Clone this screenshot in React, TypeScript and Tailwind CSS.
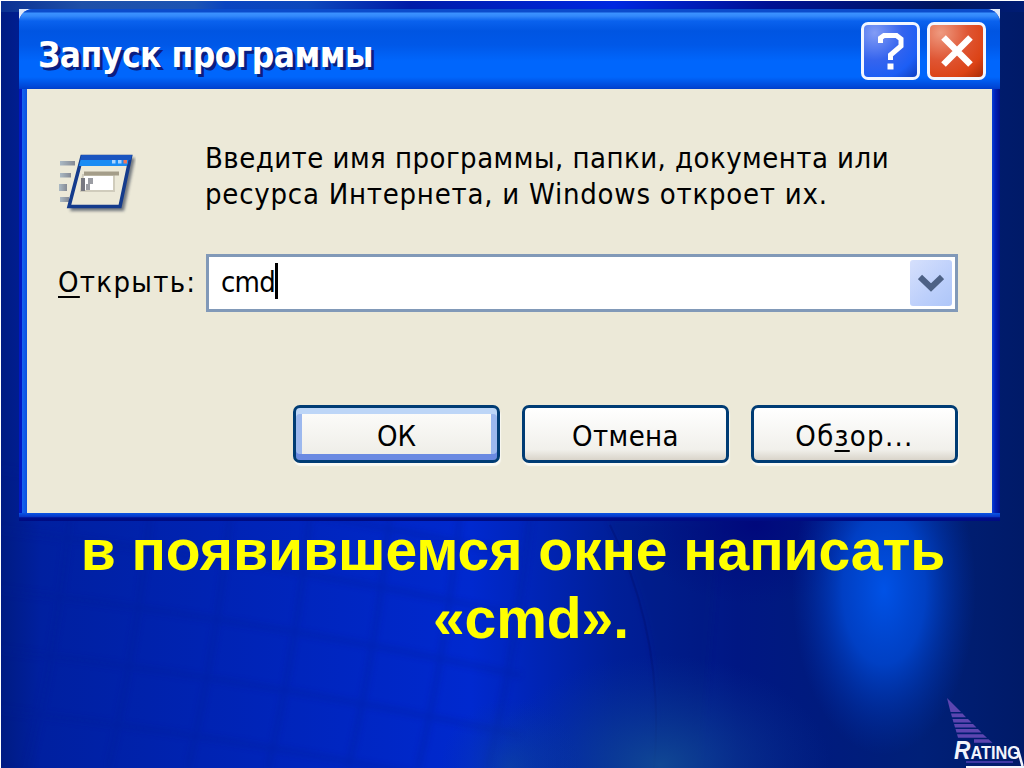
import React from "react";

const UI_FONT = "font-['DejaVu_Sans_Condensed','DejaVu_Sans',sans-serif] [font-stretch:condensed]";

const GRID_ROWS = [470, 530, 590, 650, 710, 770]
const GRID_COLS = [70, 150, 230, 310, 390, 460, 530]

const STRIPES = [
    "947,698 961,712 950.500,712",
    "951,713.500 962.500,713.500 966,717.300 952,717.300",
    "952.500,719 968,719 971.500,722.500 953.500,722.500",
    "954,724 973,724 976.500,727.500 955,727.500",
    "955.500,729 978,729 981.500,732.500 956.500,732.500",
    "957,734.200 983,734.200 987,737.800 958,737.800",
    "974,739.200 988.500,739.200 992.500,742.800 974,742.800",
]

const Backdrop = () => (
    <svg className="absolute inset-0 -z-10" width="1024" height="768" viewBox="0 0 1024 768" aria-hidden="true">
        <defs>
            <linearGradient id="base" x1="0" x2="1">
                <stop offset="0" stopColor="#001b82" />
                <stop offset="0.04" stopColor="#0020a0" />
                <stop offset="0.25" stopColor="#0024b8" />
                <stop offset="0.46" stopColor="#0029cf" />
                <stop offset="0.6" stopColor="#001f98" />
                <stop offset="0.72" stopColor="#001783" />
                <stop offset="0.9" stopColor="#002078" />
                <stop offset="1" stopColor="#001a68" />
            </linearGradient>
            <linearGradient id="topStrip" x1="0" x2="1">
                <stop offset="0" stopColor="#0a3092" />
                <stop offset="0.08" stopColor="#1e50a8" />
                <stop offset="0.19" stopColor="#1c54b4" />
                <stop offset="0.22" stopColor="#0a44c0" />
                <stop offset="0.3" stopColor="#0c48bc" />
                <stop offset="0.4" stopColor="#001ca8" />
                <stop offset="0.6" stopColor="#0028e0" />
                <stop offset="0.75" stopColor="#001294" />
                <stop offset="0.92" stopColor="#001660" />
                <stop offset="1" stopColor="#001c74" />
            </linearGradient>
            <radialGradient id="glow">
                <stop offset="0" stopColor="#0052e6" />
                <stop offset="0.45" stopColor="#004bdc" stopOpacity="0.75" />
                <stop offset="1" stopColor="#0034b0" stopOpacity="0" />
            </radialGradient>
            <radialGradient id="teal">
                <stop offset="0" stopColor="#134f96" stopOpacity="0.85" />
                <stop offset="1" stopColor="#0a3a98" stopOpacity="0" />
            </radialGradient>
            <radialGradient id="dark">
                <stop offset="0" stopColor="#00087c" />
                <stop offset="1" stopColor="#000e80" stopOpacity="0" />
            </radialGradient>
            <filter id="soft"><feGaussianBlur stdDeviation="3" /></filter>
        </defs>
        <rect width="1024" height="768" fill="url(#base)" />
        <rect width="1024" height="12" fill="url(#topStrip)" />
        <g stroke="#001a92" strokeWidth="5" fill="none" opacity="0.28" filter="url(#soft)">
            {GRID_ROWS.map((y) => (
                <path key={y} d={`M0 ${y} Q260 ${y + 30} 520 ${y + 85}`} />
            ))}
            {GRID_COLS.map((x) => (
                <path key={x} d={`M${x} 515 Q${x - 14} 650 ${x - 42} 768`} />
            ))}
        </g>
        <path d="M608 520 Q670 640 654 768 L700 768 L720 520 Z" fill="#001a7c" opacity="0.3" filter="url(#soft)" />
        <path d="M610 525 Q666 640 654 768" stroke="#001070" strokeWidth="2" fill="none" opacity="0.4" />
        <ellipse cx="755" cy="525" rx="120" ry="80" fill="url(#dark)" />
        <ellipse cx="660" cy="765" rx="170" ry="110" fill="url(#teal)" />
        <ellipse cx="510" cy="768" rx="70" ry="70" fill="url(#teal)" opacity="0.6" />
        <ellipse cx="884" cy="590" rx="92" ry="165" fill="url(#glow)" />
        <path d="M0 0.5H1024M0.5 0V768" stroke="#fff" />
    </svg>
)

const RatingLogo = () => (
    <svg className="absolute right-0 bottom-0" width="84" height="78" viewBox="940 690 84 78" aria-hidden="true">
        {STRIPES.map((points) => (
            <polygon key={points} points={points} fill="#5c45b0" />
        ))}
        <path d="M966 762H1013" stroke="#3d38a5" strokeWidth="2.2" />
        <path d="M966 767H1024" stroke="#f2f4fc" strokeWidth="2" />
        <text x="954" y="759" fill="#f2f4fc" fontFamily="Liberation Sans, sans-serif" fontWeight="bold" fontSize="25" textLength="66" lengthAdjust="spacingAndGlyphs">
            <tspan fontStyle="italic">R</tspan><tspan fontSize="18">ATING</tspan>
        </text>
        <path d="M1017.500 748L1022.500 766" stroke="#f2f4fc" strokeWidth="2.5" />
    </svg>
)

const RunIcon = () => (
    <svg width="80" height="64" viewBox="56 150 80 64" aria-hidden="true">
        <defs>
            <filter id="drop"><feGaussianBlur stdDeviation="1.6" /></filter>
            <linearGradient id="dash">
                <stop offset="0" stopColor="#aab9c4" />
                <stop offset="1" stopColor="#858a94" />
            </linearGradient>
        </defs>
        <path d="M85 158H135L124 211H70Z" fill="#4c5260" opacity="0.75" filter="url(#drop)" />
        <g fill="url(#dash)">
            <rect x="60" y="161" width="15" height="4.5" />
            <rect x="60" y="173" width="11" height="4.5" />
            <rect x="59" y="184" width="8" height="7" />
            <rect x="60" y="197" width="9" height="5" />
        </g>
        <path d="M82 156.500H130.500L120 206.500H69Z" fill="#ece9d8" stroke="#143b8c" strokeWidth="3.500" />
        <path d="M81.500 155H132L130.500 160H80Z" fill="#1a55c0" />
        <path d="M80.500 160H128.500L127 166H79Z" fill="#1a8cf4" />
        <rect x="112" y="160" width="3.500" height="3.500" fill="#a9d4ff" />
        <rect x="118" y="160" width="3.500" height="3.500" fill="#a9d4ff" />
        <rect x="123.500" y="160" width="3.500" height="3.500" fill="#f0785a" />
        <path d="M83 175H114V191H81Z" fill="#fff" stroke="#d0ccbc" strokeWidth="2" />
        <path d="M84 173.500H119" stroke="#a49d89" strokeWidth="4" />
        <rect x="81" y="178" width="4" height="13" fill="#777880" />
        <path d="M88 178H93V184H90V190H86V184H88Z" fill="#9b9da3" />
    </svg>
)

const CaptionButton = ({ kind }: { kind: "help" | "close" }) => (
    <button
        aria-label={kind}
        className={`flex h-[58px] w-[59px] items-center justify-center rounded-[7px] border-[3px] border-[#f2f6ff] ${kind === "help"
            ? "bg-[radial-gradient(circle_at_20%_15%,#829cf5_0%,#3564ee_45%,#1c5ef5_75%,#1140c0_100%)]"
            : "bg-[radial-gradient(circle_at_20%_15%,#ee9a80_0%,#df5533_45%,#dc4316_75%,#a82c08_100%)]"}`}
    >
        {kind === "help" ? (
            <svg width="28" height="38" viewBox="0 0 28 38" fill="none" stroke="#fff" strokeWidth="5">
                <path d="M3.500 11V6L7 3.500H19.500L24 7V14L17 20L13.500 23V28" />
                <path d="M13.500 31.500V37.500" strokeWidth="6" />
            </svg>
        ) : (
            <svg width="32" height="32" viewBox="0 0 32 32" fill="none" stroke="#fff" strokeWidth="6.500">
                <path d="M2.500 2.500L29.500 29.500M29.500 2.500L2.500 29.500" />
            </svg>
        )}
    </button>
)

const DialogButton = ({ children, primary }: { children: React.ReactNode, primary?: boolean }) => (
    <button
        className={`h-[58px] w-[207px] rounded-[7px] border-[3px] border-[#003c74] pt-1.5 text-[29px] ${primary
            ? "bg-[linear-gradient(#fdfdfb,#edece6)] [box-shadow:inset_0_6px_0_#bdd6f7,inset_0_-6px_0_#6a8ae2,inset_6px_0_0_#9cb8ee,inset_-6px_0_0_#9cb8ee,1px_3px_1px_#faf9f3]"
            : "bg-[linear-gradient(#ffffff,#f1f0eb_80%,#d9d4ca)] [box-shadow:1px_3px_1px_#faf9f3]"}`}
    >
        {children}
    </button>
)

const App = () => {
    return (
        <main className="relative isolate flex h-[768px] w-[1024px] flex-col overflow-hidden pt-[9px] pl-[19px]">
            <Backdrop />
            <div className="h-[512px] w-[981px] shrink-0 bg-[linear-gradient(90deg,#dfe8f8_14px,transparent_14px,transparent_967px,#dfe8f8_967px)] bg-[length:100%_14px] bg-no-repeat">
                <section className={`flex h-full flex-col rounded-t-[14px] bg-[linear-gradient(90deg,#0018c4_0,#0018c4_3px,#1565f0_3px,#0a50e0_8px,#0a3fd8_973px,#0020b8_976px,#000f8c)] text-black ${UI_FONT}`}>
                    <header className="flex h-20 items-center justify-between rounded-t-[14px] bg-[linear-gradient(#0b4ccc_0,#0b4ccc_3px,#3b92ff_4px,#3389fb_7px,#0a62ee_12px,#0055e2_22px,#0058e8_36px,#0066fc_52px,#0066fc_68px,#0046d6_78px,#003dc8)] pr-3.5 pl-[19px]">
                        <h1 className="pt-3 text-[35px] leading-none font-bold tracking-[-0.5px] whitespace-nowrap text-white [text-shadow:3px_3px_0_#0a1e80]">Запуск программы</h1>
                        <div className="flex gap-[7px] pt-1">
                            <CaptionButton kind="help" />
                            <CaptionButton kind="close" />
                        </div>
                    </header>
                    <div className="mx-2 h-[424px] bg-[#ece9d8] pt-[51px] pr-[34px] pl-[29px]">
                        <div className="flex h-[114px] gap-[69px]">
                            <div className="pt-[10px]"><RunIcon /></div>
                            <p className="pt-px text-[29px] leading-[35.5px] tracking-[0.46px] whitespace-nowrap">
                                Введите имя программы, папки, документа или<br />
                                <span className="tracking-[0.76px]">ресурса Интернета, и Windows откроет их.</span>
                            </p>
                        </div>
                        <div className="flex h-[58px] items-center">
                            <label className="w-[150px] pl-0.5 text-[29px] tracking-[1.3px] whitespace-nowrap"><span className="underline decoration-2 underline-offset-4">О</span>ткрыть:</label>
                            <div className="flex h-[58px] flex-1 items-center justify-between border-[3px] border-[#8199b8] bg-white pr-[3px] pl-3">
                                <div className="flex items-center text-[29px] tracking-[-0.8px]">
                                    <span>cmd</span>
                                    <span className="mb-1 h-9 w-[3px] bg-black" />
                                </div>
                                <button aria-label="open list" className="flex h-[46px] w-[42px] items-center justify-center rounded-[3px] bg-[linear-gradient(135deg,#d6e0fc,#bccffb_60%,#aec6f8)]">
                                    <svg width="26" height="18" viewBox="0 0 26 18" fill="none" stroke="#4d6185" strokeWidth="6">
                                        <path d="M2 3L13 13.500L24 3" />
                                    </svg>
                                </button>
                            </div>
                        </div>
                        <div className="mt-[93px] flex justify-end gap-[22px]">
                            <DialogButton primary>ОК</DialogButton>
                            <DialogButton><span className="tracking-[0.4px]">Отмена</span></DialogButton>
                            <DialogButton><span className="tracking-[1.3px]">Об<span className="underline decoration-2 underline-offset-4">з</span>ор...</span></DialogButton>
                        </div>
                    </div>
                    <div className="h-2 bg-[linear-gradient(#0a54e4,#0738c8_45%,#000f90_60%,#000b80)]" />
                </section>
            </div>
            <h2 className="-mt-[5px] w-[988px] text-center font-['Liberation_Sans',Arial,sans-serif] text-[57px] leading-[68px] font-bold tracking-[-0.07px] whitespace-nowrap text-[#ffff00]">
                в появившемся окне написать<br />
                <span className="pl-9">«cmd».</span>
            </h2>
            <RatingLogo />
        </main>
    );
}

export default App
